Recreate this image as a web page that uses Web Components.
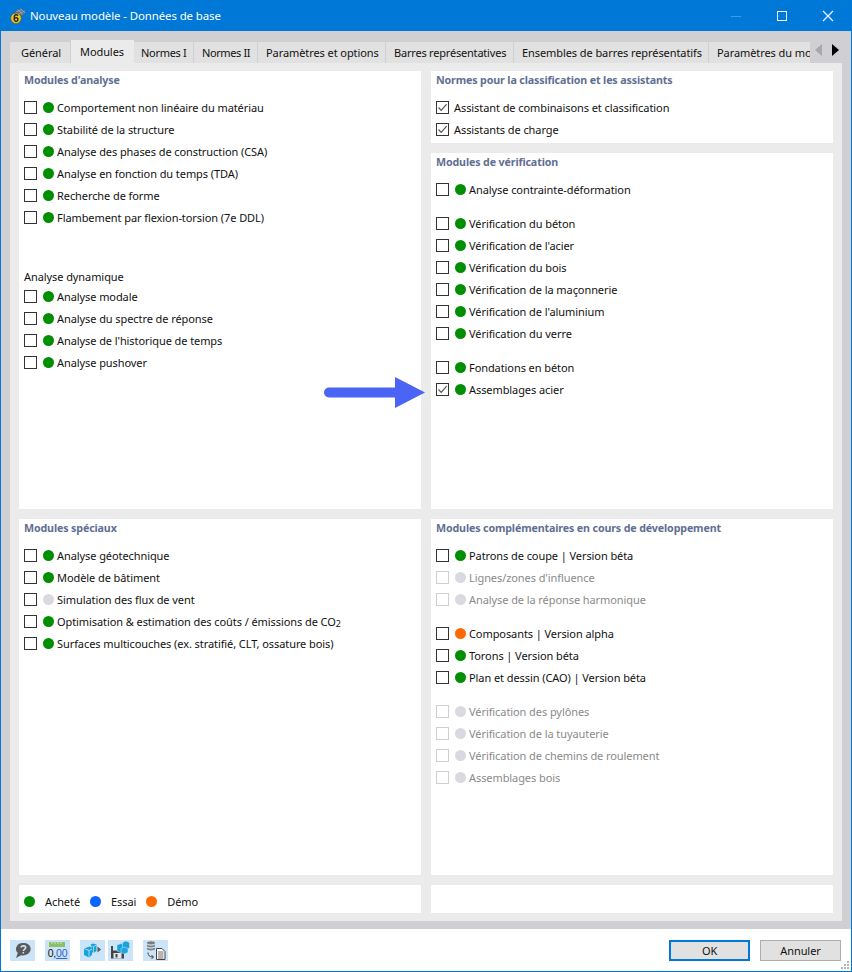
<!DOCTYPE html>
<html lang="fr">
<head>
<meta charset="utf-8">
<title>Nouveau modèle - Données de base</title>
<style>
  html, body { margin: 0; padding: 0; background: #fff; }
  body { font: 11px "Noto Sans", "Liberation Sans", sans-serif; letter-spacing: -.08px; color: #000; }
</style>
</head>
<body>
<template id="check-row-tpl">
  <style>
    :host { display: flex; align-items: center; height: 22px; gap: 6px; white-space: nowrap; color: #111; }
    :host([disabled]) { color: #8a8a8a; }
    .box { width: 11px; height: 11px; border: 1px solid #333; background: #fff; flex: none; display: flex; }
    :host([disabled]) .box { border-color: #cfcfcf; }
    .box svg { display: none; width: 11px; height: 11px; }
    :host([checked]) .box svg { display: block; }
    .dot { width: 11px; height: 11px; border-radius: 50%; flex: none; margin-right: -3px; background: #008f00; }
    :host([dot="gray"]) .dot { background: #d9d9df; }
    :host([dot="orange"]) .dot { background: #ff6a00; }
    :host([nodot]) .dot { display: none; }
    :host([nodot]) .label { margin-left: -1px; }
    ::slotted(sub) { font-size: 9px; line-height: 0; vertical-align: -1px; }
  </style>
  <span class="box"><svg viewBox="0 0 11 11"><path d="M1.5 5.5 4.2 8.3 9.6 2.2" fill="none" stroke="#555" stroke-width="1.2"/></svg></span>
  <span class="dot"></span>
  <span class="label"><slot></slot></span>
</template>

<script>
class CheckRow extends HTMLElement {
  constructor() {
    super();
    const root = this.attachShadow({ mode: "open" });
    root.appendChild(document.getElementById("check-row-tpl").content.cloneNode(true));
  }
}
customElements.define("check-row", CheckRow);

class ModulePanel extends HTMLElement {
  constructor() {
    super();
    this.shadowDOM = this.attachShadow({ mode: "open" });
  }

  connectedCallback() {
    const heading = this.getAttribute("heading");
    this.shadowDOM.innerHTML = `
    <style>
      :host { display: block; background: #fff; padding: 0 5px; min-height: 0; }
      h3 { margin: 0 0 7px 0; font-size: 10.7px; letter-spacing: -.14px; line-height: 18px; font-weight: 700; color: #5f6f92; white-space: nowrap; }
    </style>
    ${heading ? `<h3>${heading}</h3>` : ""}
    <slot></slot>`;
  }
}
customElements.define("module-panel", ModulePanel);

class RowGroup extends HTMLElement {
  constructor() {
    super();
    this.shadowDOM = this.attachShadow({ mode: "open" });
  }

  connectedCallback() {
    const label = this.getAttribute("label");
    this.shadowDOM.innerHTML = `
    <style>
      :host { display: block; margin-top: var(--gap, 12px); }
      .label { line-height: 18px; margin-bottom: -1px; color: #111; }
    </style>
    ${label ? `<div class="label">${label}</div>` : ""}
    <slot></slot>`;
  }
}
customElements.define("row-group", RowGroup);

class TitleBar extends HTMLElement {
  constructor() {
    super();
    this.attachShadow({ mode: "open" }).innerHTML = `
    <style>
      :host { display: flex; align-items: center; height: 30px; background: #0078d7; color: #fff; font-size: 11.4px; padding-left: 9px; }
      .logo { width: 16px; height: 16px; margin-right: 4px; flex: none; }
      .text { flex: 1; white-space: nowrap; margin-top: -1px; }
      .ctl { width: 46px; height: 30px; display: flex; align-items: center; justify-content: center; }
      .ctl svg { width: 12px; height: 12px; }
    </style>
    <svg class="logo" viewBox="0 0 16 16">
      <path d="M5 3 10.500 0.500 15.500 3.500 12.500 8 7 6z" fill="#5f6f8c"/>
      <path d="M7.500 1.800 13 6.500M10.500 0.800 15 5M6 4 12 1.500M8 6 15 3" stroke="#a9b6c9" stroke-width=".6"/>
      <circle cx="6" cy="10.300" r="5.200" fill="#f3c81e" stroke="#6b5a10" stroke-width=".6"/>
      <text x="6" y="14" text-anchor="middle" font-family="Liberation Sans" font-size="10.500" font-weight="700" fill="#222">6</text>
    </svg>
    <span class="text"><slot></slot></span>
    <span class="ctl"><svg viewBox="0 0 12 12"><path d="M1 6.500h10" stroke="#3f9be3" stroke-width="1"/></svg></span>
    <span class="ctl"><svg viewBox="0 0 12 12"><rect x="1.500" y="1.500" width="9" height="9" fill="none" stroke="#fff"/></svg></span>
    <span class="ctl"><svg viewBox="0 0 12 12"><path d="M1 1 11 11M11 1 1 11" stroke="#fff" stroke-width="1.100"/></svg></span>`;
  }
}
customElements.define("title-bar", TitleBar);

class TabBar extends HTMLElement {
  constructor() {
    super();
    this.attachShadow({ mode: "open" }).innerHTML = `
    <style>
      :host { display: flex; height: 23px; align-items: flex-end; position: relative; }
      .tabs { display: flex; flex: none; width: 801px; overflow: hidden; align-items: flex-end; height: 23px; }
      .arrows { flex: none; width: 31px; height: 21px; align-self: flex-start; display: flex; gap: 8px; padding-left: 4px; box-sizing: border-box; }
      .arrows svg { width: 8px; height: 12px; margin-top: 4px; }
    </style>
    <div class="tabs"><slot></slot></div>
    <div class="arrows">
      <svg viewBox="0 0 8 12"><path d="M7 0V12L0 6z" fill="#a8a8a8"/></svg>
      <svg viewBox="0 0 8 12"><path d="M1 0V12L8 6z" fill="#000"/></svg>
    </div>`;
  }
}
customElements.define("tab-bar", TabBar);

class TabItem extends HTMLElement {
  constructor() {
    super();
    this.attachShadow({ mode: "open" }).innerHTML = `
    <style>
      :host { display: flex; flex: none; align-items: center; box-sizing: border-box; height: 21px; padding-left: var(--pad, 9px); width: var(--w); background: #e1e1e1; border-right: 1px solid #d0cfd4; white-space: nowrap; color: #111; overflow: hidden; }
      :host([selected]) { height: 23px; background: #ebebeb; border-right: 0; }
    </style>
    <slot></slot>`;
  }
}
customElements.define("tab-item", TabItem);

class ToolButton extends HTMLElement {
  constructor() {
    super();
    this.attachShadow({ mode: "open" }).innerHTML = `
    <style>
      :host { display: block; position: relative; width: 25px; height: 21px; background: #cce4f7; flex: none; }
      ::slotted(svg) { display: block; }
    </style>
    <slot></slot>`;
  }
}
customElements.define("tool-button", ToolButton);

class DlgButton extends HTMLElement {
  constructor() {
    super();
    this.attachShadow({ mode: "open" }).innerHTML = `
    <style>
      :host { display: flex; align-items: center; justify-content: center; box-sizing: border-box; width: 81px; height: 21px; background: #e1e1e1; border: 1px solid #adadad; color: #111; }
      :host([primary]) { border: 2px solid #0078d7; }
    </style>
    <slot></slot>`;
  }
}
customElements.define("dlg-button", DlgButton);

class LegendItem extends HTMLElement {
  constructor() {
    super();
    this.shadowDOM = this.attachShadow({ mode: "open" });
  }

  connectedCallback() {
    this.shadowDOM.innerHTML = `
    <style>
      :host { display: flex; align-items: center; gap: 10px; white-space: nowrap; color: #111; }
      i { width: 11px; height: 11px; border-radius: 50%; background: ${this.getAttribute("color")}; }
    </style>
    <i></i><slot></slot>`;
  }
}
customElements.define("legend-item", LegendItem);

class ModelDialog extends HTMLElement {
  constructor() {
    super();
    this.attachShadow({ mode: "open" }).innerHTML = `
    <style>
      :host { display: flex; flex-direction: column; box-sizing: border-box; width: 852px; height: 972px; border: 1px solid #0078d7; background: #fff; position: relative; overflow: hidden; }
      .band { background: #d0cfd4; height: 898px; padding: 9px 9px 8px 9px; box-sizing: border-box; display: flex; flex-direction: column; }
      .page { flex: 1; background: #ebebeb; padding: 8px 9px; display: grid; grid-template-columns: 402px 402px; grid-template-rows: 438px 356px 28px; gap: 10px; min-height: 0; }
      .stack { display: grid; grid-template-rows: 72px 356px; gap: 10px; min-height: 0; }
      .bottom { flex: 1; display: flex; align-items: center; justify-content: space-between; padding: 0 10px 0 9px; }
      .tools { display: flex; }
      .arrow { position: absolute; left: 323px; top: 376px; }
      .grip { position: absolute; right: 1px; bottom: 1px; }
    </style>
    <slot name="title"></slot>
    <div class="band">
      <slot name="tabs"></slot>
      <div class="page">
        <slot name="tl"></slot>
        <div class="stack"><slot name="tr1"></slot><slot name="tr2"></slot></div>
        <slot name="bl"></slot>
        <slot name="br"></slot>
        <slot name="fl"></slot>
        <slot name="fr"></slot>
      </div>
    </div>
    <div class="bottom">
      <div class="tools"><slot name="tools"></slot></div>
      <div class="btns"><slot name="btns"></slot></div>
    </div>
    <svg class="arrow" width="102" height="32" viewBox="0 0 102 32">
      <path d="M5 15.500H72" stroke="#4a64f6" stroke-width="10" stroke-linecap="round"/>
      <path d="M71 0 101 15.500 71 31z" fill="#4a64f6"/>
    </svg>
    <svg class="grip" width="10" height="10" viewBox="0 0 10 10" fill="#b5b5b5">
      <rect x="7" y="1" width="2" height="2"/><rect x="4" y="4" width="2" height="2"/><rect x="7" y="4" width="2" height="2"/>
      <rect x="1" y="7" width="2" height="2"/><rect x="4" y="7" width="2" height="2"/><rect x="7" y="7" width="2" height="2"/>
    </svg>`;
  }
}
customElements.define("model-dialog", ModelDialog);
</script>

<model-dialog>
  <title-bar slot="title">Nouveau modèle - Données de base</title-bar>

  <tab-bar slot="tabs">
    <tab-item style="--w:61px;--pad:11px">Général</tab-item>
    <tab-item selected style="--w:63px">Modules</tab-item>
    <tab-item style="--w:60px;--pad:7px;letter-spacing:-.3px">Normes I</tab-item>
    <tab-item style="--w:64px;--pad:8px;letter-spacing:-.4px">Normes II</tab-item>
    <tab-item style="--w:128px;--pad:8px">Paramètres et options</tab-item>
    <tab-item style="--w:128px;--pad:8px;letter-spacing:-.2px">Barres représentatives</tab-item>
    <tab-item style="--w:195px;--pad:8px">Ensembles de barres représentatifs</tab-item>
    <tab-item style="--w:102px;--pad:8px">Paramètres du modèle</tab-item>
  </tab-bar>

  <module-panel slot="tl" heading="Modules d'analyse">
    <check-row>Comportement non linéaire du matériau</check-row>
    <check-row>Stabilité de la structure</check-row>
    <check-row>Analyse des phases de construction (CSA)</check-row>
    <check-row>Analyse en fonction du temps (TDA)</check-row>
    <check-row>Recherche de forme</check-row>
    <check-row>Flambement par flexion-torsion (7e DDL)</check-row>
    <row-group label="Analyse dynamique" style="--gap:40px">
      <check-row>Analyse modale</check-row>
      <check-row>Analyse du spectre de réponse</check-row>
      <check-row>Analyse de l'historique de temps</check-row>
      <check-row>Analyse pushover</check-row>
    </row-group>
  </module-panel>

  <module-panel slot="tr1" heading="Normes pour la classification et les assistants">
    <check-row checked nodot>Assistant de combinaisons et classification</check-row>
    <check-row checked nodot>Assistants de charge</check-row>
  </module-panel>

  <module-panel slot="tr2" heading="Modules de vérification">
    <check-row>Analyse contrainte-déformation</check-row>
    <row-group>
      <check-row>Vérification du béton</check-row>
      <check-row>Vérification de l'acier</check-row>
      <check-row>Vérification du bois</check-row>
      <check-row>Vérification de la maçonnerie</check-row>
      <check-row>Vérification de l'aluminium</check-row>
      <check-row>Vérification du verre</check-row>
    </row-group>
    <row-group>
      <check-row>Fondations en béton</check-row>
      <check-row checked>Assemblages acier</check-row>
    </row-group>
  </module-panel>

  <module-panel slot="bl" heading="Modules spéciaux">
    <check-row>Analyse géotechnique</check-row>
    <check-row>Modèle de bâtiment</check-row>
    <check-row dot="gray">Simulation des flux de vent</check-row>
    <check-row>Optimisation &amp; estimation des coûts / émissions de CO<sub>2</sub></check-row>
    <check-row>Surfaces multicouches (ex. stratifié, CLT, ossature bois)</check-row>
  </module-panel>

  <module-panel slot="br" heading="Modules complémentaires en cours de développement">
    <check-row>Patrons de coupe | Version béta</check-row>
    <check-row disabled dot="gray">Lignes/zones d'influence</check-row>
    <check-row disabled dot="gray">Analyse de la réponse harmonique</check-row>
    <row-group>
      <check-row dot="orange">Composants | Version alpha</check-row>
      <check-row>Torons | Version béta</check-row>
      <check-row>Plan et dessin (CAO) | Version béta</check-row>
    </row-group>
    <row-group>
      <check-row disabled dot="gray">Vérification des pylônes</check-row>
      <check-row disabled dot="gray">Vérification de la tuyauterie</check-row>
      <check-row disabled dot="gray">Vérification de chemins de roulement</check-row>
      <check-row disabled dot="gray">Assemblages bois</check-row>
    </row-group>
  </module-panel>

  <module-panel slot="fl" style="display:flex;gap:10px;align-items:center;box-sizing:border-box;padding-top:4px">
    <legend-item color="#008f00">Acheté</legend-item>
    <legend-item color="#0a64ff">Essai</legend-item>
    <legend-item color="#ff6a00">Démo</legend-item>
  </module-panel>
  <module-panel slot="fr"></module-panel>

  <div slot="tools" style="display:flex">
    <tool-button>
      <svg width="25" height="21" viewBox="0 0 25 21"><path d="M13.500 3a6.800 6 0 0 1 2.500 11.700 7 7 0 0 1-5 .5L6 18l1.800-5A6.800 6 0 0 1 13.500 3z" fill="#5a5a5a"/><path d="M11 7.500C11.300 5.300 15.700 5.300 15.700 7.600c0 1.700-2.400 1.700-2.400 3.400M13.300 12v1.500" fill="none" stroke="#cce4f7" stroke-width="1.600"/></svg>
    </tool-button>
    <tool-button style="margin-left:10px">
      <svg width="25" height="5" viewBox="0 0 25 5" style="padding-top:2px"><rect x="4" width="16" height="5" fill="#8cc068"/><path d="M7 0v2M10 0v2M13 0v2M16 0v2" stroke="#cfe6bf"/></svg>
      <div style="font:400 10.500px/12px 'Liberation Sans',sans-serif;letter-spacing:-.2px;color:#111;text-align:center;margin-top:0">0,<span style="color:#2f62c8;text-decoration:underline">00</span></div>
    </tool-button>
    <tool-button style="margin-left:10px">
      <svg width="25" height="21" viewBox="0 0 25 21"><path d="M4 8.500 9.500 6.500 12 7.500V15L9 17.500 4 15z" fill="#17a2d8"/><path d="M4 8.500 9 10.500V17.500M9 10.500 12 9" stroke="#cce4f7" stroke-width=".8" fill="none"/><path d="M10.500 4.500 13 3.500 16.500 4.500V11L13.500 13 12 12.300V7.200z" fill="#17a2d8"/><path d="M12.500 6 13.500 6.500 16.500 5M13.500 6.500V13" stroke="#cce4f7" stroke-width=".7" fill="none"/><path d="M17.500 6.500 21 9.500 17.500 12.500z" fill="#5a5a5a"/></svg>
    </tool-button>
    <tool-button style="margin-left:3px">
      <svg width="25" height="21" viewBox="0 0 25 21"><path d="M3 6h10.500L16 8.500V18.500H3z" fill="#454545"/><rect x="5" y="6" width="6" height="4.500" fill="#cce4f7"/><rect x="5.500" y="13" width="8" height="5.500" fill="#dfe9f1"/><rect x="7.500" y="14" width="2" height="3.500" fill="#454545"/><path d="M9 5 13 3.500 16 5V11L12.500 12.500 9 11z" fill="#17a2d8" stroke="#cce4f7" stroke-width=".5"/><path d="M14.500 2.500 18 1 21.500 2.500V8L18 9.500 14.500 8z" fill="#17a2d8" stroke="#cce4f7" stroke-width=".5"/><path d="M13 8.500 16.500 7 20 8.500V12.500L16.500 14 13 12.500z" fill="#1ea7dc" stroke="#cce4f7" stroke-width=".5"/></svg>
    </tool-button>
    <tool-button style="margin-left:10px">
      <svg width="25" height="21" viewBox="0 0 25 21"><ellipse cx="8" cy="2.800" rx="4" ry="1.600" fill="#7d7d7d"/><path d="M4 4.500c1 1.500 7 1.500 8 0v1.800c-1 1.500-7 1.500-8 0zM4 7.500c1 1.500 7 1.500 8 0v1.800c-1 1.500-7 1.500-8 0z" fill="#7d7d7d"/><path d="M5 12.500c0 3 1.500 4.500 5 4.500M8.500 15l2 2-2 2" fill="none" stroke="#444" stroke-width="1"/><path d="M13.500 8.500h5.500l3 3v8h-8.500z" fill="#fff" stroke="#444"/><path d="M15 12h5.500M15 14h5.500M15 16h5.500M15 18h5.500" stroke="#444" stroke-width=".8"/></svg>
    </tool-button>
  </div>
  <div slot="btns" style="display:flex;gap:10px">
    <dlg-button primary>OK</dlg-button>
    <dlg-button>Annuler</dlg-button>
  </div>
</model-dialog>
</body>
</html>
